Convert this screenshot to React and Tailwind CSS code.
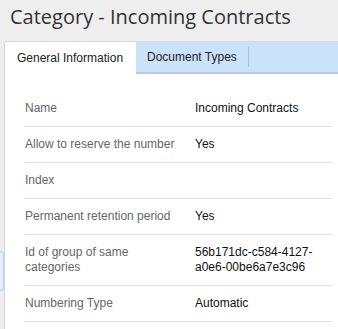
import React from "react";

const rows = [
  ["Name", "Incoming Contracts"],
  ["Allow to reserve the number", "Yes"],
  ["Index", ""],
  ["Permanent retention period", "Yes"],
  ["Id of group of same categories", "56b171dc-c584-4127-a0e6-00be6a7e3c96"],
  ["Numbering Type", "Automatic"],
];

export default function App() {
  return (
    <div className="relative w-[338px] h-[329px] overflow-hidden bg-[#eeeeee] font-['Liberation_Sans',Arial,sans-serif] text-[12px]">
      <h1 className="pl-[10px] pt-[3px] text-[20px] leading-[28px] text-[#333333] font-['Open_Sans',sans-serif] font-normal">
        Category - Incoming Contracts
      </h1>
      <div className="mt-[10px] ml-[4px] h-[300px] bg-white border-l border-t border-[#d6d6d6] rounded-tl-[3px]">
        <div className="flex h-[32px] bg-[#cbe2fb] border-b-2 border-[#b9cce0]">
          <div className="-mb-[2px] flex items-center whitespace-nowrap bg-white pl-[12px] w-[131px] text-[#222222]">
            General Information
          </div>
          <div className="flex items-center whitespace-nowrap pl-[11px] pr-[11px] text-[#222222]">
            Document Types
          </div>
          <div className="mt-[5px] h-[20px] w-px bg-[#b0c0d0]" />
        </div>
        <div className="pl-[20px] pr-[6px] pt-[17px]">
          {rows.map(([k, v]) => (
            <div key={k} className="flex border-b border-[#e3e3e3] py-[10px] leading-[15px]">
              <div className="w-[170px] pr-[14px] text-[#666666]">{k}</div>
              <div className="flex-1 pr-[6px] text-[#111111] break-words">{v}</div>
            </div>
          ))}
        </div>
      </div>
      <div className="absolute left-0 top-[251px] h-[40px] w-[4px] rounded-r-[4px] border border-l-0 border-[#b7cff0] bg-[#e4eefb]" />
    </div>
  );
}
